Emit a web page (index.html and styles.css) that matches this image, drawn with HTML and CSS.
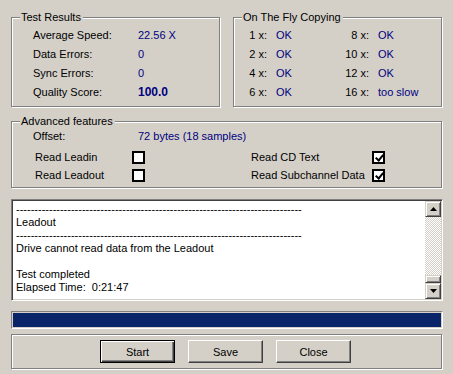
FILE: index.html
```html
<!DOCTYPE html>
<html lang="en">
<head>
    <meta charset="UTF-8">
    <title>Test Results</title>
    <link rel="stylesheet" href="styles.css">
</head>
<body>
    <div class="dialog">
        <div class="top-row">
            <fieldset class="group results">
                <legend>Test Results</legend>
                <div class="row"><span class="label">Average Speed:</span><span class="value">22.56 X</span></div>
                <div class="row"><span class="label">Data Errors:</span><span class="value">0</span></div>
                <div class="row"><span class="label">Sync Errors:</span><span class="value">0</span></div>
                <div class="row"><span class="label">Quality Score:</span><span class="value score">100.0</span></div>
            </fieldset>
            <fieldset class="group fly">
                <legend>On The Fly Copying</legend>
                <div class="fly-grid">
                    <span class="speed">1 x:</span><span class="value">OK</span>
                    <span class="speed">8 x:</span><span class="value">OK</span>
                    <span class="speed">2 x:</span><span class="value">OK</span>
                    <span class="speed">10 x:</span><span class="value">OK</span>
                    <span class="speed">4 x:</span><span class="value">OK</span>
                    <span class="speed">12 x:</span><span class="value">OK</span>
                    <span class="speed">6 x:</span><span class="value">OK</span>
                    <span class="speed">16 x:</span><span class="value">too slow</span>
                </div>
            </fieldset>
        </div>

        <fieldset class="group advanced">
            <legend>Advanced features</legend>
            <div class="offset-row"><span class="label">Offset:</span><span class="value">72 bytes (18 samples)</span></div>
            <div class="adv-grid">
                <span class="opt">Read Leadin</span><span class="check"></span>
                <span class="opt">Read CD Text</span><span class="check checked"></span>
                <span class="opt">Read Leadout</span><span class="check"></span>
                <span class="opt">Read Subchannel Data</span><span class="check checked"></span>
            </div>
        </fieldset>

        <div class="log">
            <div class="log-text">------------------------------------------------------------------------------
Leadout
------------------------------------------------------------------------------
Drive cannot read data from the Leadout

Test completed
Elapsed Time:  0:21:47</div>
            <div class="scrollbar">
                <div class="sb-btn"><svg width="7" height="4" viewBox="0 0 7 4"><path d="M3.5 0 L7 4 L0 4 Z" fill="#000"/></svg></div>
                <div class="sb-track"></div>
                <div class="sb-thumb"></div>
                <div class="sb-btn"><svg width="7" height="4" viewBox="0 0 7 4"><path d="M0 0 L7 0 L3.5 4 Z" fill="#000"/></svg></div>
            </div>
        </div>

        <div class="progress"><div class="progress-fill"></div></div>

        <div class="buttons">
            <button class="btn default">Start</button>
            <button class="btn">Save</button>
            <button class="btn">Close</button>
        </div>
    </div>
</body>
</html>
```

FILE: styles.css
```css
body {
    margin: 0;
    background: #d4d0c8;
    font-family: "Liberation Sans", Arial, sans-serif;
    font-size: 11px;
    color: #000;
    width: 453px;
    height: 374px;
    overflow: hidden;
}

.dialog {
    padding: 11px 10px 0 11px;
    display: flex;
    flex-direction: column;
}

/* etched group boxes */
.group {
    margin: 0;
    border: 1px solid #808080;
    box-shadow: inset 1px 1px #fff, 1px 1px #fff;
    min-width: 0;
}

.group legend {
    padding: 0 2px 0 1px;
    margin-left: 8px;
    line-height: 12px;
    background: #d4d0c8;
}

.top-row {
    display: flex;
    gap: 13px;
    width: 431px;
}

.top-row .group {
    width: 209px;
    box-sizing: border-box;
    height: 96px;
    padding: 3px 0 0 0;
}

.row {
    display: flex;
    height: 19px;
    line-height: 19px;
}

.results .label {
    width: 105px;
    padding-left: 21px;
}

.value {
    color: #000080;
}

.score {
    font-weight: bold;
    font-size: 12px;
}

.fly-grid {
    display: grid;
    grid-template-columns: 33px 49px 35px auto;
    column-gap: 9px;
    grid-auto-rows: 19px;
    line-height: 19px;
}

.speed {
    text-align: right;
}

.advanced {
    margin-top: 8px;
    width: 431px;
    box-sizing: border-box;
    height: 73px;
    padding: 2px 0 0 0;
}

.offset-row {
    display: flex;
    line-height: 14px;
    height: 14px;
}

.offset-row .label {
    width: 105px;
    padding-left: 21px;
}

.adv-grid {
    display: grid;
    grid-template-columns: 97px 119px 121px 13px;
    grid-auto-rows: 18px;
    align-items: center;
    padding-left: 23px;
    margin-top: 5px;
}

.check {
    width: 13px;
    height: 13px;
    box-sizing: border-box;
    border: 2px solid #000;
    background: #fff;
    position: relative;
}

.check.checked::after {
    content: "";
    position: absolute;
    left: 1px;
    top: 0px;
    width: 3px;
    height: 6px;
    border: solid #000;
    border-width: 0 2px 2px 0;
    transform: translate(2px, 0) rotate(40deg);
}

/* log window */
.log {
    margin-top: 11px;
    height: 102px;
    box-sizing: border-box;
    display: flex;
    background: #fff;
    border: 1px solid;
    border-color: #808080 #fff #fff #808080;
    box-shadow: inset 1px 1px #404040, inset -1px -1px #d4d0c8;
    padding: 1px;
    width: 432px;
}

.log-text {
    flex: 1;
    white-space: pre;
    line-height: 13px;
    padding: 2px 0 0 3px;
    overflow: hidden;
}

.scrollbar {
    width: 16px;
    display: flex;
    flex-direction: column;
}

.sb-btn,
.sb-thumb {
    background: #d4d0c8;
    box-sizing: border-box;
    border: 1px solid;
    border-color: #d4d0c8 #404040 #404040 #d4d0c8;
    box-shadow: inset 1px 1px #fff, inset -1px -1px #808080;
}

.sb-btn {
    height: 16px;
    display: flex;
    align-items: center;
    justify-content: center;
}

.sb-thumb {
    height: 8px;
}

.sb-track {
    flex: 1;
    background-color: #fff;
    background-image: repeating-conic-gradient(#d4d0c8 0 25%, #fff 0 50%);
    background-size: 2px 2px;
}

/* progress bar */
.progress {
    margin-top: 10px;
    width: 432px;
    height: 18px;
    box-sizing: border-box;
    border: 1px solid;
    border-color: #808080 #fff #fff #808080;
    padding: 1px;
}

.progress-fill {
    height: 100%;
    background: #0a246a;
}

/* button panel */
.buttons {
    margin-top: 5px;
    width: 431px;
    height: 35px;
    box-sizing: border-box;
    border: 1px solid #808080;
    box-shadow: inset 1px 1px #fff, 1px 1px #fff;
    display: flex;
    justify-content: center;
    align-items: center;
    gap: 13px;
    padding-right: 2px;
}

.btn {
    width: 75px;
    height: 23px;
    font-family: "Liberation Sans", Arial, sans-serif;
    font-size: 11px;
    color: #000;
    background: #d4d0c8;
    border: 1px solid;
    border-color: #fff #404040 #404040 #fff;
    box-shadow: inset -1px -1px #808080;
    padding: 0;
}

.btn.default {
    border: 1px solid #000;
    box-shadow: inset 1px 1px #fff, inset -1px -1px #404040, inset -2px -2px #808080;
}
```
